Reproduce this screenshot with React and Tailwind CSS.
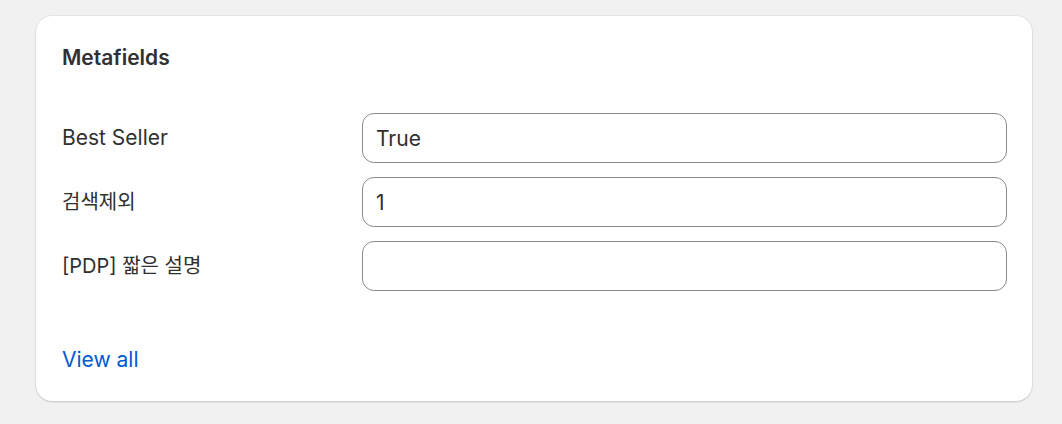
import React from "react";

const fields = [
  { label: "Best Seller", value: "True", size: "text-[21px]" },
  { label: "검색제외", value: "1", size: "text-[20px]" },
  { label: "[PDP] 짧은 설명", value: "", size: "text-[20px]" },
];

export default function App() {
  return (
    <div className="min-h-screen bg-[#f1f1f1] px-[36px] pt-[16px] font-['Inter','Noto_Sans_CJK_KR',sans-serif] text-[#303030]">
      <div className="w-[996px] rounded-[16px] bg-white pl-[26px] pr-[25px] pt-[30px] pb-[29px] shadow-[0_1px_2px_rgba(0,0,0,0.15),0_0_0_1px_rgba(0,0,0,0.04)]">
        <h2 className="text-[21px] font-semibold leading-[24px]">Metafields</h2>
        <div className="mt-[43px] flex flex-col gap-[14px]">
          {fields.map((f) => (
            <div key={f.label} className="grid grid-cols-[300px_1fr] items-center">
              <span className={`${f.size} leading-[24px]`}>{f.label}</span>
              <input
                readOnly
                value={f.value}
                className="h-[50px] w-full rounded-[12px] border border-[#8a8a8a] px-[13px] text-[21px] text-[#303030] outline-none"
              />
            </div>
          ))}
        </div>
        <a href="#" className="mt-[57px] block text-[21px] leading-[24px] text-[#005bd3]">
          View all
        </a>
      </div>
    </div>
  );
}
